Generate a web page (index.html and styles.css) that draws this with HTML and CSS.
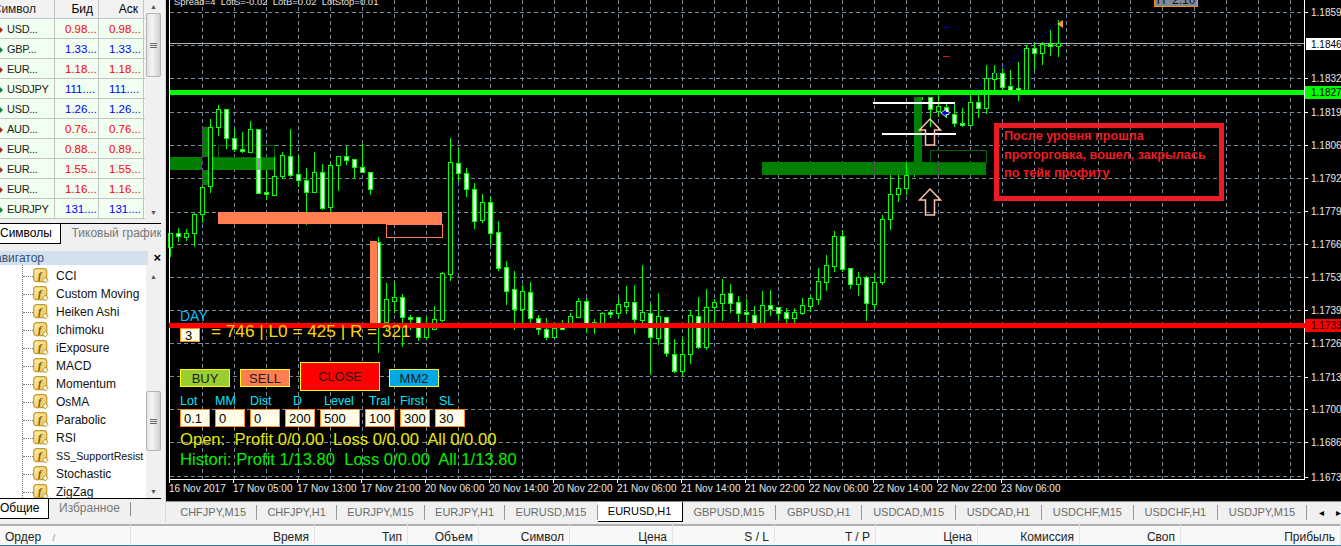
FILE: index.html
```html
<!DOCTYPE html>
<html lang="ru">
<head>
<meta charset="utf-8">
<title>MetaTrader</title>
<link rel="stylesheet" href="styles.css">
</head>
<body>
<svg class="defs" width="0" height="0" aria-hidden="true">
  <defs>
    <linearGradient id="gold" x1="0" y1="0" x2="1" y2="1">
      <stop offset="0" stop-color="#fff0b0"/>
      <stop offset="1" stop-color="#eec050"/>
    </linearGradient>
  </defs>
  <symbol id="fx" viewBox="0 0 16 16">
    <rect x=".7" y=".7" width="13" height="13" rx="2.800" fill="url(#gold)" stroke="#c49a30" stroke-width="1.200"/>
    <text x="6.800" y="11" text-anchor="middle" class="fx-glyph">f</text>
    <path d="M12.300 9.200l2.900 2.900-2.900 2.900-2.900-2.900z" fill="#fff6d0" stroke="#b08a2c" stroke-width=".9"/>
  </symbol>
</svg>
<div class="top">
  <aside class="sidebar">
    <section class="market">
      <div class="mw-table">
        <div class="mw-row mw-head"><span class="c-sym">Символ</span><span class="c-num">Бид</span><span class="c-num">Аск</span></div>
        <div class="mw-row"><span class="c-sym down">USD...</span><span class="c-num red">0.98...</span><span class="c-num red">0.98...</span></div>
        <div class="mw-row"><span class="c-sym up">GBP...</span><span class="c-num blue">1.33...</span><span class="c-num blue">1.33...</span></div>
        <div class="mw-row"><span class="c-sym down">EUR...</span><span class="c-num red">1.18...</span><span class="c-num red">1.18...</span></div>
        <div class="mw-row"><span class="c-sym up">USDJPY</span><span class="c-num blue">111....</span><span class="c-num blue">111....</span></div>
        <div class="mw-row"><span class="c-sym up">USD...</span><span class="c-num blue">1.26...</span><span class="c-num blue">1.26...</span></div>
        <div class="mw-row"><span class="c-sym down">AUD...</span><span class="c-num red">0.76...</span><span class="c-num red">0.76...</span></div>
        <div class="mw-row"><span class="c-sym down">EUR...</span><span class="c-num red">0.88...</span><span class="c-num red">0.89...</span></div>
        <div class="mw-row"><span class="c-sym down">EUR...</span><span class="c-num red">1.55...</span><span class="c-num red">1.55...</span></div>
        <div class="mw-row"><span class="c-sym down">EUR...</span><span class="c-num red">1.16...</span><span class="c-num red">1.16...</span></div>
        <div class="mw-row"><span class="c-sym up">EURJPY</span><span class="c-num blue">131....</span><span class="c-num blue">131....</span></div>
      </div>
      <div class="scrollbar sb-market">
        <span class="sb-arrow">▲</span>
        <span class="sb-thumb thumb-market"><i></i><i></i><i></i></span>
        <span class="sb-arrow">▼</span>
      </div>
    </section>
    <nav class="side-tabs tabs-market">
      <span class="side-tab active">Символы</span>
      <span class="side-tab">Тиковый график</span>
    </nav>
    <header class="nav-title"><span>Навигатор</span><b>×</b></header>
    <section class="navigator">
      <ul class="tree">
        <li><svg class="fx"><use href="#fx"/></svg>CCI</li>
        <li><svg class="fx"><use href="#fx"/></svg>Custom Moving</li>
        <li><svg class="fx"><use href="#fx"/></svg>Heiken Ashi</li>
        <li><svg class="fx"><use href="#fx"/></svg>Ichimoku</li>
        <li><svg class="fx"><use href="#fx"/></svg>iExposure</li>
        <li><svg class="fx"><use href="#fx"/></svg>MACD</li>
        <li><svg class="fx"><use href="#fx"/></svg>Momentum</li>
        <li><svg class="fx"><use href="#fx"/></svg>OsMA</li>
        <li><svg class="fx"><use href="#fx"/></svg>Parabolic</li>
        <li><svg class="fx"><use href="#fx"/></svg>RSI</li>
        <li class="tight"><svg class="fx"><use href="#fx"/></svg>SS_SupportResist</li>
        <li><svg class="fx"><use href="#fx"/></svg>Stochastic</li>
        <li><svg class="fx"><use href="#fx"/></svg>ZigZag</li>
      </ul>
      <div class="scrollbar sb-nav">
        <span class="sb-arrow">▲</span>
        <span class="sb-thumb thumb-nav"><i></i><i></i><i></i></span>
        <span class="sb-arrow">▼</span>
      </div>
    </section>
    <nav class="side-tabs tabs-nav">
      <span class="side-tab active">Общие</span>
      <span class="side-tab sep">Избранное</span>
    </nav>
  </aside>

  <main class="workspace">
    <div class="chart">
      <svg id="plot" class="plot" viewBox="166 0 1175 501" width="1175" height="501"></svg>
      <div class="level-red"></div>
      <div class="info">Spread=4&nbsp; LotS=-0.02&nbsp; LotB=0.02&nbsp; LotStop=0.01</div>
      <div class="top-btn">П&nbsp; 2.10</div>
      <div class="note"><p>После уровня прошла<br>проторговка, вошел, закрылась<br>по тейк профиту</p></div>

      <div class="panel">
        <div class="day">DAY</div>
        <div class="day-row"><span class="field f-day">3</span><span class="range">= 746 | L0 = 425 | R = 321</span></div>
        <div class="buttons">
          <span class="btn buy">BUY</span>
          <span class="btn sell">SELL</span>
          <span class="btn close">CLOSE</span>
          <span class="btn mm2">MM2</span>
        </div>
        <div class="fields">
          <label class="w30">Lot<span class="field">0.1</span></label>
          <label class="w30">MM<span class="field">0</span></label>
          <label class="w30">Dist<span class="field">0</span></label>
          <label class="w30 p8">D<span class="field">200</span></label>
          <label class="w40 p4">Level<span class="field">500</span></label>
          <label class="w30 p4">Tral<span class="field">100</span></label>
          <label class="w30">First<span class="field">300</span></label>
          <label class="w30 p4">SL<span class="field">30</span></label>
        </div>
        <div class="stat open">Open:&nbsp; Profit 0/0.00&nbsp; Loss 0/0.00&nbsp; All 0/0.00</div>
        <div class="stat hist">Histori: Profit 1/13.80&nbsp; Loss 0/0.00&nbsp; All 1/13.80</div>
      </div>

      <div class="dates">
        <span>16 Nov 2017</span><span>17 Nov 05:00</span><span>17 Nov 13:00</span><span>17 Nov 21:00</span><span>20 Nov 06:00</span><span>20 Nov 14:00</span><span>20 Nov 22:00</span><span>21 Nov 06:00</span><span>21 Nov 14:00</span><span>21 Nov 22:00</span><span>22 Nov 06:00</span><span>22 Nov 14:00</span><span>22 Nov 22:00</span><span>23 Nov 06:00</span>
      </div>
    </div>
    <nav class="chart-tabs">
      <span>CHFJPY,M15</span><span>CHFJPY,H1</span><span>EURJPY,M15</span><span>EURJPY,H1</span><span>EURUSD,M15</span><span class="active">EURUSD,H1</span><span>GBPUSD,M15</span><span>GBPUSD,H1</span><span>USDCAD,M15</span><span>USDCAD,H1</span><span>USDCHF,M15</span><span>USDCHF,H1</span><span>USDJPY,M15</span>
      <em>◂</em><em>▸</em>
    </nav>
  </main>
</div>
<div class="orders">
  <span class="left">Ордер <i>/</i></span><span>Время</span><span>Тип</span><span>Объем</span><span>Символ</span><span>Цена</span><span>S / L</span><span>T / P</span><span>Цена</span><span>Комиссия</span><span>Своп</span><span>Прибыль</span>
</div>
<script src="chart.js"></script>
</body>
</html>
```
FILE: styles.css
```css
* { box-sizing: border-box; }
html, body { margin: 0; padding: 0; }
body {
  width: 1341px; height: 546px; overflow: hidden;
  background: #f0f0f0; color: #000;
  font-family: "Liberation Sans", Arial, sans-serif; font-size: 12px;
}
.defs { position: absolute; }
.fx-glyph { font: italic bold 11px "Liberation Serif", serif; fill: #7a5a10; }

.top { display: flex; height: 522px; }

/* Sidebar */
.sidebar { width: 166px; flex: none; height: 522px; display: flex; flex-direction: column; background: #f0f0f0; border-right: 1px solid #d8d8d8; overflow: hidden; }
.market { display: flex; height: 221px; flex: none; background: #f0f0f0; }
.mw-table { width: 145px; flex: none; overflow: hidden; font-size: 11.5px; }
.mw-row { display: grid; grid-template-columns: 55px 44px 45px; height: 20px; background: #f0fff0; border-bottom: 1px solid #c4c4c4; align-items: center; }
.mw-row span { border-right: 1px solid #c4c4c4; height: 100%; display: flex; align-items: center; white-space: nowrap; }
.mw-head { height: 19px; background: #f2f2f2; font-size: 12px; }
.mw-head .c-sym { justify-content: flex-end; padding-right: 18px; font-size: 12px; letter-spacing: 0; }
.mw-head .c-num { justify-content: flex-end; padding-right: 5px; color: #000; }
.c-sym { padding-left: 7px; position: relative; color: #222; font-size: 11px; letter-spacing: -.3px; }
.c-num { padding-left: 10px; }
.red { color: #f00; }
.blue { color: #00f; }
.down::before, .up::before { content: ""; position: absolute; left: 0; top: 8px; border: 3px solid transparent; border-right: 0; }
.down::before { border-left-color: #a03020; }
.up::before { border-left-color: #108040; }

.scrollbar { width: 15px; margin-left: 1px; flex: none; display: flex; flex-direction: column; align-items: center; background: #f0f0f0; }
.sb-arrow { height: 13px; font-size: 7px; line-height: 13px; color: #555; flex: none; }
.sb-thumb { width: 15px; flex: none; background: linear-gradient(90deg, #e4e4e4, #f4f4f4 40%, #cfcfcf); border: 1px solid #b4b4b4; border-radius: 2px; display: flex; flex-direction: column; align-items: center; justify-content: center; gap: 1px; }
.sb-thumb i { display: block; width: 7px; height: 1px; background: #666; }
.thumb-market { height: 64px; }
.thumb-nav { height: 60px; }
.sb-market .sb-arrow:last-child { margin-top: auto; margin-bottom: 2px; }
.sb-nav { padding-top: 5px; }
.sb-nav .sb-thumb { margin-top: auto; margin-bottom: 34px; }

.side-tabs { display: flex; height: 21px; flex: none; border-top: 1px solid #000; margin-right: 4px; margin-top: 2px; color: #777; align-items: flex-start; }
.side-tab { height: 20px; line-height: 18px; white-space: nowrap; padding: 0 0 0 11px; overflow: hidden; }
.side-tab.active { background: #fff; color: #000; border-right: 1px solid #000; border-bottom: 1px solid #000; padding: 0; }
.tabs-market .side-tab.active { width: 61px; }
.tabs-nav { margin-top: 0; }
.tabs-nav .side-tab.active { width: 49px; }
.tabs-nav .side-tab.sep { padding: 0 0 0 10px; width: 82px; height: 14px; margin-top: 3px; line-height: 13px; border-right: 1px solid #888; }

.nav-title { display: flex; justify-content: space-between; align-items: center; flex: none; height: 14px; margin-top: 7px; background: linear-gradient(#d3e0ee, #d3e0ee) no-repeat 0 0 / 148px 100%; color: #33507a; padding-right: 4px; }
.nav-title span { display: flex; width: 44px; justify-content: flex-end; white-space: nowrap; }
.nav-title b { color: #000; font-size: 13px; line-height: 12px; }

.navigator { display: flex; height: 233px; flex: none; background: #fff; margin-right: 5px; }
.tree { list-style: none; margin: 0; padding: 2px 0 0 0; width: 145px; flex: none; overflow: hidden; height: 233px; background: #fff; position: relative; }
.tree::before { content: ""; position: absolute; left: 22px; top: 0; bottom: 0; border-left: 1px dotted #777; }
.tree li { height: 18px; display: flex; align-items: center; white-space: nowrap; padding-left: 33px; position: relative; font-size: 12px; color: #111; }
.tree li.tight { font-size: 10.7px; }
.tree li::before { content: ""; position: absolute; left: 23px; top: 9px; width: 10px; border-top: 1px dotted #777; }
.fx { width: 16px; height: 16px; margin-right: 7px; flex: none; }

/* Workspace */
.workspace { flex: 1; min-width: 0; display: flex; flex-direction: column; }
.chart { position: relative; height: 501px; background: #000; overflow: hidden; flex: none; }
.plot { position: absolute; left: 0; top: 0; display: block; }
.plot text { font: 10px "Liberation Sans", Arial, sans-serif; fill: #e8e8e8; }
.plot text.dark { fill: #000; }
.info { position: absolute; left: 8px; top: -4px; color: #e0e0e0; font-size: 9.5px; white-space: nowrap; }
.top-btn { position: absolute; left: 988px; top: -12px; width: 44px; height: 19px; padding-top: 4px; text-align: center; background: #7f8b99; border: 1px solid #ff8c1a; color: #111; font-size: 12px; }
.note { position: absolute; left: 828px; top: 123px; width: 230px; height: 78px; border: 5px solid #ed1c24; padding: 0 0 0 5px; color: #ed1c24; font-weight: bold; font-size: 12.7px; line-height: 18.5px; white-space: nowrap; }
.note p { margin: -1px 0 0; }

.level-red { position: absolute; left: 3px; top: 323px; width: 1136px; height: 5px; background: #f00; }
.panel { position: absolute; left: 14px; top: 306px; color: #00d5ff; }
.day { height: 19px; font-size: 14px; line-height: 20px; color: #00bfff; }
.day-row { display: flex; align-items: center; height: 18px; margin-top: 2px; }
.field { display: block; height: 18px; background: #fffde6; border: 1px solid #ff8c1a; color: #000; font-size: 13px; line-height: 17px; padding-left: 3px; }
.f-day { width: 20px; height: 14px; line-height: 14px; padding-left: 4px; margin-top: -2px; }
.range { margin-left: 11px; color: #ffd700; font-size: 17.2px; white-space: nowrap; margin-top: -10px; }
.buttons { display: flex; align-items: flex-start; height: 29px; margin-top: 17px; }
.btn { display: block; width: 50px; height: 18px; margin-top: 7px; border: 1px solid #ff0; color: #1a1a1a; text-align: center; font-size: 13px; line-height: 17px; margin-right: 10px; }
.buy { background: #9acd32; }
.sell { background: #ff7f50; }
.close { width: 80px; height: 29px; margin-top: 0; background: #f00; line-height: 27px; margin-right: 9px; }
.mm2 { background: #00a8e6; margin-right: 0; }
.fields { display: flex; gap: 5px; margin-top: 2px; }
.fields label { display: flex; flex-direction: column; font-size: 12.5px; line-height: 16px; color: #00e5ff; white-space: nowrap; }
.w30 { width: 30px; }
.w40 { width: 40px; }
.p8 { text-indent: 8px; }
.p4 { text-indent: 4px; }
.fields .field { text-indent: 0; }
.stat { font-size: 16.6px; line-height: 20px; white-space: nowrap; }
.open { color: #e8e800; margin-top: 3px; }
.hist { color: #00f000; }

.dates { position: absolute; left: 3px; top: 482px; display: flex; color: #e8e8e8; font-size: 10px; line-height: 14px; }
.dates span { width: 64px; flex: none; white-space: nowrap; }

.chart-tabs { height: 21px; display: flex; align-items: center; flex: none; padding-left: 4px; background: #f0f0f0; border-top: 1px solid #8a8a8a; color: #6b6b6b; overflow: hidden; white-space: nowrap; font-size: 11px; }
.chart-tabs span { padding: 0 10.2px; height: 15px; line-height: 15px; border-right: 1px solid #999; flex: none; }
.chart-tabs .active ~ span { padding: 0 10.8px; }
.chart-tabs span.active { width: 85px; height: 20px; line-height: 18px; text-align: center; background: #fff; color: #000; border-right: 1px solid #000; border-bottom: 1px solid #000; padding: 0; align-self: flex-start; }
.chart-tabs em { font-style: normal; color: #000; font-size: 10px; flex: none; margin-left: 12px; }

.orders { display: grid; grid-template-columns: 131px 184px 93px 71px 91px 103px 102px 101px 102px 102px 101px 160px; height: 24px; background: linear-gradient(#f0f0f0 0 2px, #b0b0b0 2px 4px, #f8f8f8 4px); border-bottom: 1px solid #2a80c0; overflow: hidden; }
.orders span { text-align: right; padding: 7px 5px 0 0; border-right: 1px solid #e4e4e4; white-space: nowrap; color: #222; line-height: 16px; }
.orders .left { text-align: left; padding-left: 5px; }
.orders .left i { font-style: normal; color: #888; font-size: 9px; margin-left: 8px; }
```
FILE: chart.js
```js
// Chart: candles [hi, lo, bodyTop, bodyBottom, white(1)/hollow(0)], 8px apart from x=170.
var C = [
[233,257,233,247,0],[228,242,233,236,1],[229,241,233,237,0],[213,247,214,233,0],[186,223,187,214,0],
[119,193,127,186,0],[105,136,109,127,0],[109,149,109,138,1],[129,152,138,149,1],[132,153,149,151,1],
[121,152,129,152,0],[129,193,129,193,1],[170,200,192,194,1],[157,195,176,195,0],[152,179,155,176,0],
[129,177,156,175,1],[155,187,174,180,1],[168,225,180,192,1],[152,193,172,192,0],[164,210,172,208,1],
[163,212,165,207,0],[156,191,156,165,0],[146,165,156,160,1],[159,179,159,167,1],[144,172,167,172,1],
[172,195,172,189,1],[237,353,242,323,1],[283,330,299,322,0],[282,313,297,301,0],[294,347,297,317,1],
[315,330,317,318,1],[317,341,317,337,1],[317,340,327,337,0],[306,330,319,329,0],[272,322,273,320,0],
[138,281,162,274,0],[148,182,163,173,1],[168,197,173,189,1],[183,229,189,221,1],[194,223,202,220,0],
[197,245,202,233,1],[221,271,232,268,1],[261,305,267,291,1],[271,330,289,309,1],[285,323,291,309,0],
[282,325,292,318,1],[315,335,318,329,1],[318,340,329,337,1],[322,337,328,337,0],[320,330,327,329,1],
[313,328,316,325,0],[298,318,301,317,0],[298,333,301,325,1],[319,334,322,323,1],[312,325,313,323,0],
[310,318,312,314,1],[298,318,304,313,0],[286,314,302,306,0],[285,334,302,319,1],[265,325,312,320,0],
[304,375,313,337,1],[293,345,316,338,0],[317,357,317,353,1],[339,373,354,371,1],[337,376,354,371,0],
[310,364,315,354,0],[297,349,316,347,1],[289,350,307,347,0],[299,323,302,307,0],[279,321,294,303,0],
[284,313,293,303,1],[296,322,302,313,1],[299,325,312,314,1],[306,329,315,325,1],[291,325,305,325,0],
[290,316,305,309,1],[307,321,307,313,1],[308,325,312,318,1],[308,325,312,318,0],[298,315,305,313,0],
[295,312,298,306,0],[268,305,281,299,0],[255,291,265,282,0],[231,272,236,266,0],[230,272,236,269,1],
[268,289,268,284,1],[272,296,277,284,0],[276,321,277,303,1],[273,309,282,304,0],[215,285,219,282,0],
[175,230,194,219,0],[175,202,188,194,0],[163,195,175,188,0],[175,177,97,175,0],[97,100,97,163,0],
[97,127,97,109,1],[93,117,106,111,0],[104,118,107,113,1],[103,127,114,123,1],[108,127,123,125,1],
[95,125,102,125,0],[93,118,102,108,1],[65,114,78,108,0],[65,93,73,79,0],[68,95,73,87,1],
[70,95,86,90,1],[62,101,88,91,1],[45,90,48,90,0],[42,70,48,53,1],[42,65,44,53,0],[30,56,44,46,1],[20,57,43,46,0]
];
var out = [];
function r(x, y, w, h, f) { out.push('<rect x="' + x + '" y="' + y + '" width="' + w + '" height="' + h + '" fill="' + f + '" shape-rendering="crispEdges"/>'); }
function dash(x1, y1, x2, y2, c, d) { out.push('<line x1="' + x1 + '" y1="' + y1 + '" x2="' + x2 + '" y2="' + y2 + '" stroke="' + c + '" stroke-dasharray="' + (d || '4 3') + '" shape-rendering="crispEdges"/>'); }
var GREEN = '#007f00', LIME = '#00ff00', GRID = '#778899', CORAL = '#ff7f50';

// grid
var ys = [12, 45, 78, 112, 145, 178, 212, 244, 277, 310, 343, 376, 409, 442, 476];
ys.forEach(function (y) { dash(170, y + .5, 1304, y + .5, GRID); });
for (var x = 202; x < 1304; x += 32) dash(x + .5, 0, x + .5, 480, GRID);

// level blocks (overlap cancels out, as in the terminal's XOR drawing)
r(170, 157, 32, 13, GREEN); r(210, 157, 64, 13, GREEN);
r(202, 127, 8, 30, GREEN); r(202, 170, 8, 15, GREEN);
r(762, 162, 224, 13, GREEN); r(914, 97, 8, 65, GREEN);
dash(202.5, 127, 202.5, 185, '#8a2a9a', '3 4');
dash(938.5, 162, 938.5, 175, '#8a2a9a', '3 3');
dash(874.5, 162, 874.5, 175, '#8a2a9a', '3 3');
out.push('<rect x="218.5" y="145.5" width="56" height="12" fill="none" stroke="#006400" shape-rendering="crispEdges"/>');
out.push('<rect x="930.5" y="150.5" width="56" height="12" fill="none" stroke="#006400" shape-rendering="crispEdges"/>');
out.push('<rect x="386.5" y="224.5" width="56" height="13" fill="none" stroke="' + CORAL + '" shape-rendering="crispEdges"/>');

// price line
r(170, 43, 1134, 1, '#b0b0b0');

// candles
C.forEach(function (c, i) {
  var cx = 170 + 8 * i, hidden = (i === 93 || i === 94);
  r(cx, c[0], 1, c[1] - c[0], LIME);
  if (hidden) return;
  var h = Math.max(c[3] - c[2], 2);
  r(cx - 2, c[2], 5, h + 1, LIME);
  if (h > 1) r(cx - 1, c[2] + 1, 3, h - 1, c[4] ? '#fff' : '#000');
});
r(257, 158, 3, 12, '#e066e0');

// coral levels lie over the candles
r(218, 212, 224, 12, CORAL);
r(370, 241, 7, 84, CORAL);
r(377, 242, 1, 82, '#20a0a0');

// drawn levels, arrows and marks
r(873, 102, 82, 2, '#fff');
r(882, 133, 74, 2, '#fff');
function arrow(y) {
  out.push('<path d="M930 ' + y + 'l10.500 11h-6v15h-9v-15h-6z" fill="none" stroke="#ffc0a8" stroke-width="1.500"/>');
}
arrow(119); arrow(189);
dash(952, 108, 1058, 23, '#0000e0', '2 4');
r(943, 27, 7, 1, '#0000c0');
r(943, 56, 7, 1, '#e01010');
out.push('<path d="M941 113l5-4v2.500h3v3h-3v2.500z" fill="#0000d0" stroke="#fff" stroke-width=".8"/>');
out.push('<path d="M1057 24l6-4v8z" fill="#f0a030"/>');

// green level line
r(169, 90, 1136, 5, LIME);

// axes
r(169, 0, 1, 480, '#fff');
r(1304, 0, 1, 480, '#fff');
r(169, 479, 1136, 1, '#fff');
for (var t = 169; t < 1010; t += 64) r(t, 480, 1, 3, '#fff');

// price labels
[['1.18590', 12], ['1.18325', 78], ['1.18190', 112], ['1.18060', 145], ['1.17925', 178], ['1.17795', 211], ['1.17660', 244], ['1.17530', 277], ['1.17395', 310], ['1.17265', 343], ['1.17130', 377], ['1.17000', 409], ['1.16865', 442], ['1.16730', 477]].forEach(function (p) {
  r(1304, p[1], 4, 1, '#fff');
  out.push('<text x="1311" y="' + (p[1] + 4) + '">' + p[0] + '</text>');
});
r(1306, 38, 35, 12, '#fff');
out.push('<text class="dark" x="1311" y="48">1.18466</text>');
r(1305, 86, 36, 13, LIME);
out.push('<text class="dark" x="1311" y="96">1.18270</text>');
r(1305, 319, 36, 13, '#f00');
out.push('<text class="dark" x="1311" y="329">1.17334</text>');

document.getElementById('plot').innerHTML = out.join('');
```
